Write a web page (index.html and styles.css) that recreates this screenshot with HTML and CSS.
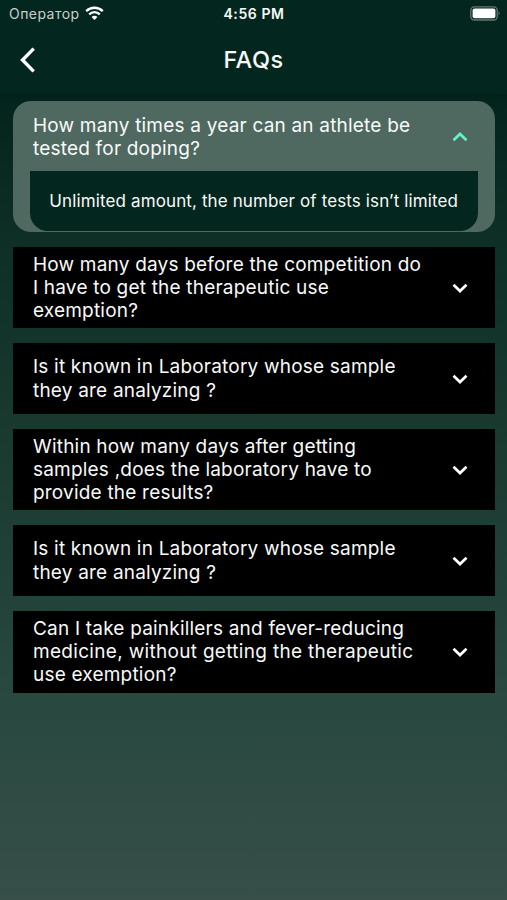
FILE: index.html
```html
<!DOCTYPE html>
<html lang="en">
<head>
<meta charset="utf-8">
<title>FAQs</title>
<link rel="stylesheet" href="styles.css">
</head>
<body>
<div class="top">
  <div class="status">
    <div class="carrier"><span class="carrier-name">Оператор</span>
      <svg class="wifi" width="19" height="15" viewBox="0 0 19 15" fill="none" stroke="#fff" stroke-width="2.3"><path d="M1.2 5.2C6 .6 13 .6 17.800 5.200"/><path d="M4.200 8.300C7.300 5.300 11.700 5.300 14.800 8.300"/><path d="M9.500 14L6.600 11C8.200 9.400 10.800 9.400 12.400 11Z" fill="#fff" stroke="none"/></svg>
    </div>
    <span class="time">4:56 PM</span>
    <svg class="battery" width="31" height="15" viewBox="0 0 31 15"><rect x=".8" y=".8" width="26.400" height="13.200" rx="3.600" fill="none" stroke="#62786f" stroke-width="1.300"/><rect x="2.600" y="2.600" width="22.800" height="9.600" rx="2" fill="#fff"/><path d="M28.600 5.200Q30.600 7.400 28.600 9.600Z" fill="#62786f"/></svg>
  </div>
  <header class="nav">
    <svg class="back" width="16" height="26" viewBox="0 0 16 26" fill="none" stroke="#fff" stroke-width="3.400"><path d="M13.700 1.600L2.500 13L13.700 24.400"/></svg>
    <h1>FAQs</h1>
    <span></span>
  </header>
</div>
<main class="list">
  <section class="card open">
    <div class="question"><p>How many times a year can an athlete be<br>tested for doping?</p>
      <svg class="chevron" width="16" height="10" viewBox="0 0 16 10"><path d="M1.500 8.300L8 2L14.500 8.300"/></svg></div>
    <div class="answer"><p>Unlimited amount, the number of tests isn’t limited</p></div>
  </section>
  <section class="card tall"><p>How many days before the competition do<br>I have to get the therapeutic use<br>exemption?</p>
    <svg class="chevron" width="16" height="10" viewBox="0 0 16 10"><path d="M1.500 1.700L8 8L14.500 1.700"/></svg></section>
  <section class="card"><p>Is it known in Laboratory whose sample<br>they are analyzing ?</p>
    <svg class="chevron" width="16" height="10" viewBox="0 0 16 10"><path d="M1.500 1.700L8 8L14.500 1.700"/></svg></section>
  <section class="card tall"><p>Within how many days after getting<br>samples ,does the laboratory have to<br>provide the results?</p>
    <svg class="chevron" width="16" height="10" viewBox="0 0 16 10"><path d="M1.500 1.700L8 8L14.500 1.700"/></svg></section>
  <section class="card"><p>Is it known in Laboratory whose sample<br>they are analyzing ?</p>
    <svg class="chevron" width="16" height="10" viewBox="0 0 16 10"><path d="M1.500 1.700L8 8L14.500 1.700"/></svg></section>
  <section class="card tall"><p>Can I take painkillers and fever-reducing<br><span class="wide">medicine, without getting the therapeutic</span><br>use exemption?</p>
    <svg class="chevron" width="16" height="10" viewBox="0 0 16 10"><path d="M1.500 1.700L8 8L14.500 1.700"/></svg></section>
</main>
</body>
</html>
```
FILE: styles.css
```css
* { box-sizing: border-box; }
body {
  margin: 0;
  height: 900px;
  overflow: hidden;
  font-family: Inter, "Liberation Sans", sans-serif;
  color: #f8faf9;
  background: linear-gradient(#02241c 90px, #0d2f26 240px, #19392f 420px, #284840 700px, #374f48 900px);
}
p, h1 { margin: 0; }
.top {
  height: 94px;
  background: #03271e;
  box-shadow: 0 1px 4px rgba(0, 20, 14, 0.5);
}
.status {
  display: grid;
  grid-template-columns: 1fr auto 1fr;
  align-items: center;
  height: 27px;
  padding: 0 6px 0 9px;
}
.carrier { display: flex; align-items: center; gap: 5px; }
.carrier-name { font-size: 14px; letter-spacing: 0.45px; color: #c5d0cc; }
.time { margin-left: -2px; font-size: 14px; font-weight: 600; letter-spacing: 0.6px; }
.battery { justify-self: end; }
.nav {
  display: grid;
  grid-template-columns: 1fr auto 1fr;
  align-items: center;
  height: 65px;
  padding: 0 20px;
}
h1 { font-size: 23.5px; line-height: 28px; font-weight: 500; letter-spacing: 0.5px; }
.list {
  display: flex;
  flex-direction: column;
  gap: 14.7px;
  padding: 7px 12.5px 0 13px;
}
.card {
  display: flex;
  align-items: center;
  justify-content: space-between;
  height: 71px;
  padding: 0 26.5px 0 20px;
  background: #000;
  font-size: 19px;
  line-height: 23.2px;
  letter-spacing: 0.2px;
  white-space: nowrap;
}
.card.tall { height: 81.7px; }
.card.tall p { line-height: 23.3px; }
.wide { letter-spacing: 0.31px; }
.chevron {
  flex: none;
  fill: none;
  stroke: #fff;
  stroke-width: 2.7;
}
.card.open {
  flex-direction: column;
  align-items: stretch;
  height: 131px;
  padding: 0 17px 1px;
  border-radius: 18px;
  background: #4f6961;
}
.question {
  display: flex;
  align-items: center;
  justify-content: space-between;
  height: 70px;
  padding: 2px 9.5px 0 3px;
}
.open .chevron { stroke: #62f2c8; }
.answer {
  display: flex;
  align-items: center;
  justify-content: center;
  height: 60px;
  padding-top: 1px;
  border-radius: 0 0 18px 18px;
  background: #03271e;
  font-size: 17px;
  letter-spacing: 0.12px;
}
```
